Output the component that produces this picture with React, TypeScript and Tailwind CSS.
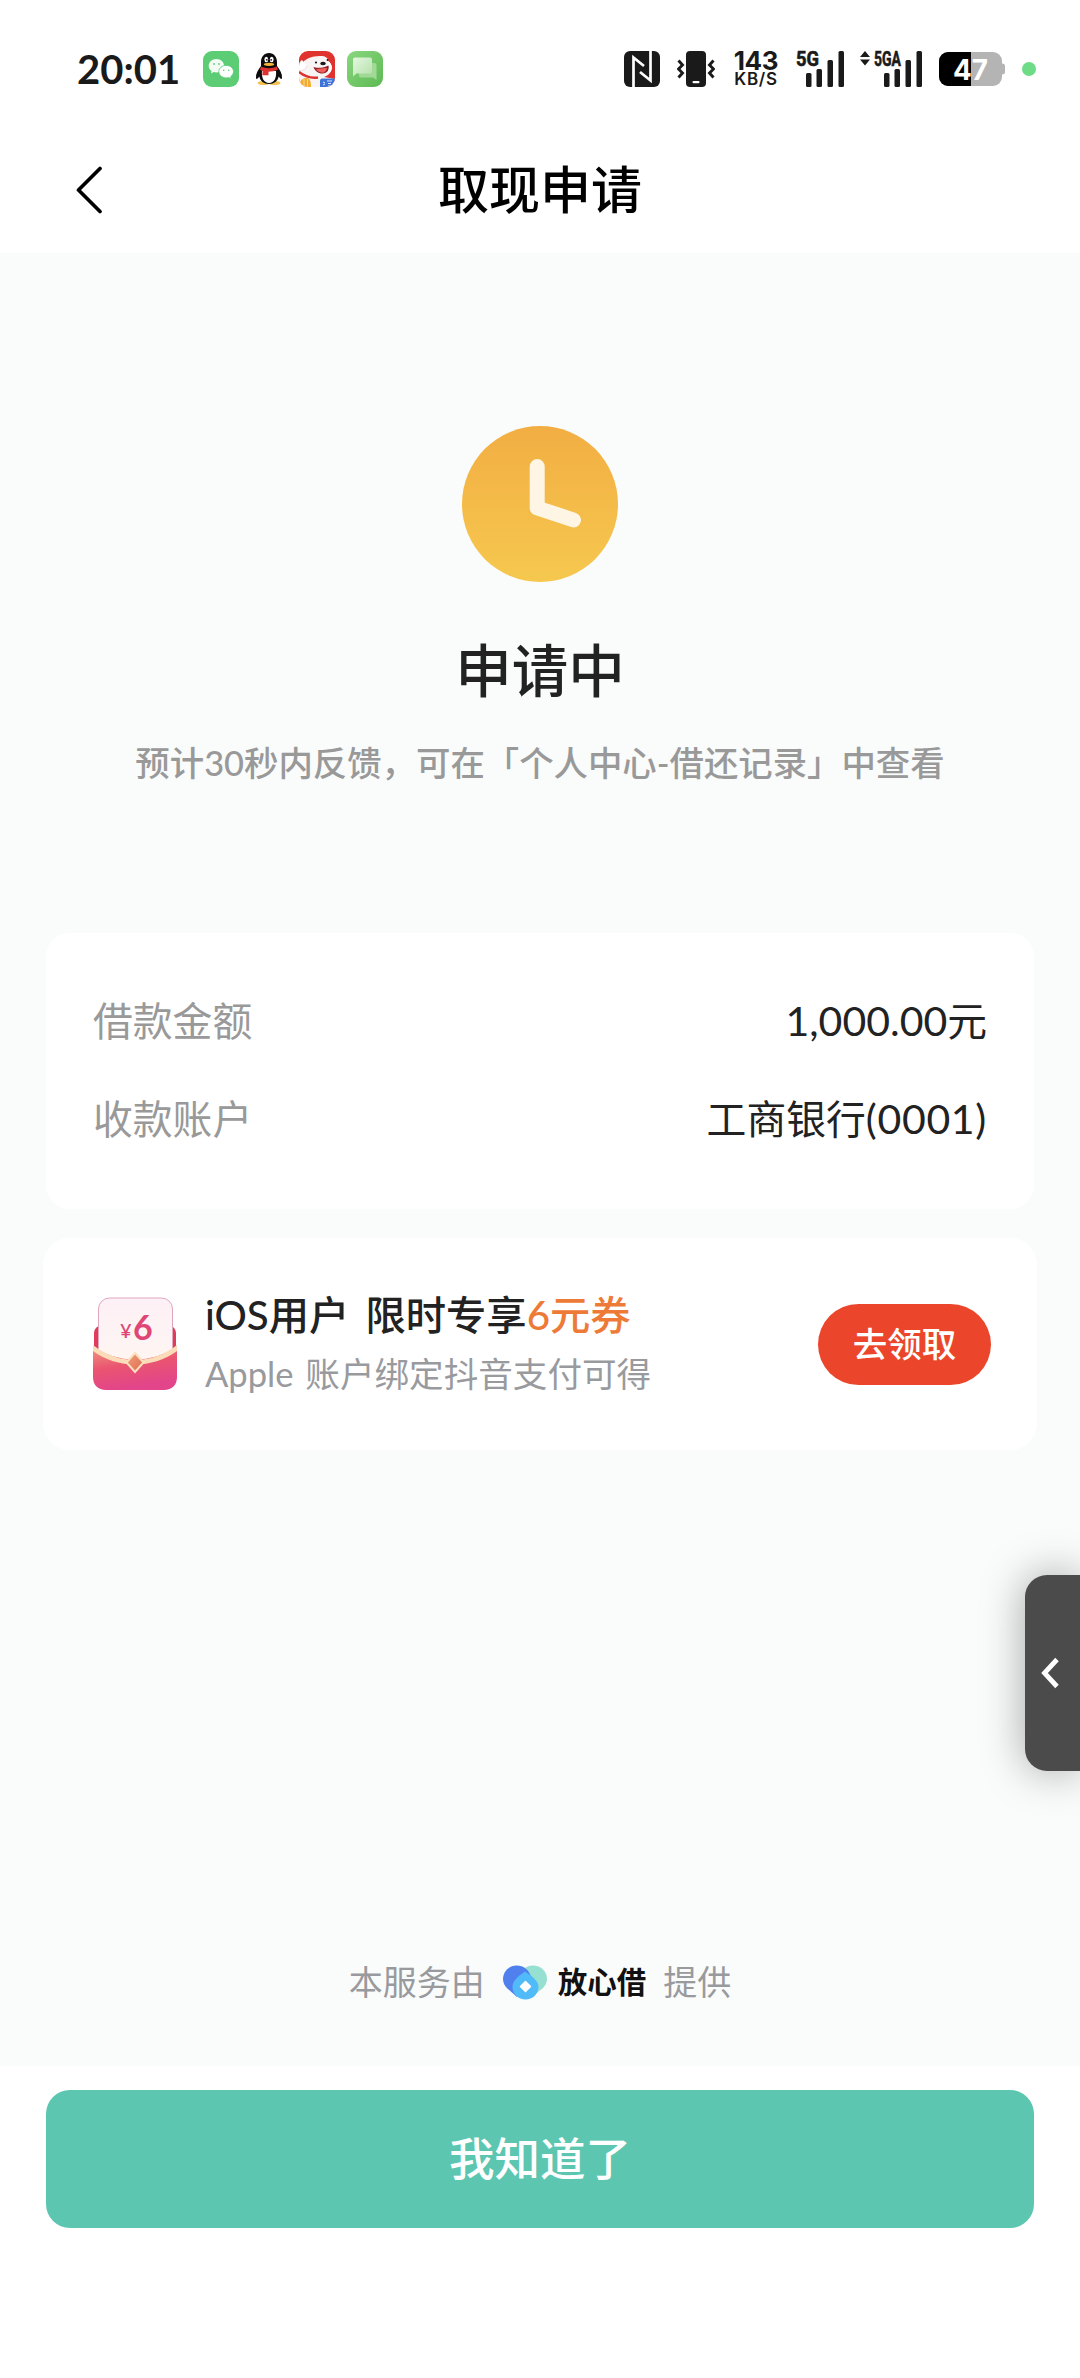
import React from 'react';

// WeChat: two overlapping speech bubbles
const WeChatIcon = () => (
  <svg className="w-9 h-9" viewBox="0 0 36 36">
    <rect width="36" height="36" rx="9" fill="#5ccd74" />
    <path d="M13.4 8C8.900 8 5.700 11 5.700 14.800c0 2.200 1.100 4 2.900 5.200l-.6 2.400 2.800-1.400c.8.3 1.700.4 2.600.4 4.400 0 7.700-2.900 7.700-6.600S17.800 8 13.400 8z" fill="#f4fbf5" />
    <path d="M23.200 14.400c-4.200 0-7.400 2.700-7.400 6.200s3.200 6.300 7.400 6.300c.9 0 1.700-.1 2.500-.4l2.500 1.300-.5-2.200c1.700-1.200 2.800-2.900 2.800-5 0-3.500-3.200-6.200-7.300-6.200z" fill="#fff" stroke="#5ccd74" strokeWidth="0.8" />
    <circle cx="11" cy="13" r="0.9" fill="#5ccd74" />
    <circle cx="16" cy="13" r="0.9" fill="#5ccd74" />
    <circle cx="20.700" cy="19.200" r="0.8" fill="#5ccd74" />
    <circle cx="25.700" cy="19.200" r="0.8" fill="#5ccd74" />
  </svg>
);

const PenguinIcon = () => (
  <svg className="w-7 h-9" viewBox="0 0 28 36">
    <ellipse cx="8.500" cy="32" rx="6" ry="2" fill="#f3c24f" />
    <ellipse cx="19.500" cy="32" rx="6" ry="2" fill="#f3c24f" />
    <path d="M14 2C9 2 6 6 6 11v4c-3 4-5.500 8-5 12 .2 1.700 1.700 1 3.300-1.500C5 30 9 33 14 33s9-3 9.700-7.500C25.300 28 26.800 28.700 27 27c.5-4-2-8-5-12v-4c0-5-3-9-8-9z" fill="#0c0c0e" />
    <path d="M7 20c-.8 7 2 12 7 12s7.800-5 7-12z" fill="#fff" />
    <ellipse cx="11.300" cy="8.500" rx="1.900" ry="2.700" fill="#fff" />
    <ellipse cx="16.700" cy="8.500" rx="1.900" ry="2.700" fill="#fff" />
    <circle cx="11.800" cy="8.800" r="0.9" fill="#111" />
    <circle cx="16.200" cy="8.800" r="0.9" fill="#111" />
    <ellipse cx="14" cy="13.300" rx="5.200" ry="1.600" fill="#f5b43a" />
    <path d="M6 15.500c5 2.200 11 2.200 16 0l.8 3.300c-3 1.300-6 1.900-9.300 2v3.400H7.300l.4-4.200c-1-.3-2-.7-2.600-1.200z" fill="#dd3330" />
  </svg>
);

const ShoppingDogIcon = () => (
  <svg className="w-9 h-9" viewBox="0 0 36 36">
    <defs>
      <clipPath id="dog-clip">
        <rect width="36" height="36" rx="9" />
      </clipPath>
    </defs>
    <g clipPath="url(#dog-clip)">
      <rect width="36" height="36" fill="#e0322f" />
      <path d="M0 36V17c2-3 4-7 8-9 3-2 8-3 13-3 6 0 8 2 8 5 3 2 5 6 3 10-1 3-4 5-7 6l11 2v8z" fill="#f8f4f4" />
      <path d="M3 9c-3 2-4 7-3 11 3 0 6-1 8-5" fill="#fff" stroke="#dccaca" strokeWidth="0.7" />
      <path d="M29 10c3 2 5 6 3 10-1 2-2 2-4 1z" fill="#fff" />
      <path d="M14.500 16c5 1.500 10 1 15-1.500 1 5-2 8-6 8-4.500 0-7.500-2.500-9-6.500z" fill="#8f1f22" />
      <path d="M17 18.500c3-1 8-1.500 11-1.500-.5 3-2.500 4.700-4.500 4.700S18.800 20.800 17 18.500z" fill="#ec5f5c" />
      <ellipse cx="24" cy="12.500" rx="2.800" ry="1.700" fill="#1a1a1c" />
      <circle cx="17" cy="11.500" r="1.100" fill="#1a1a1c" />
      <circle cx="28.500" cy="9" r="0.9" fill="#1a1a1c" />
      <path d="M0 21c5 4 12 6.500 19 5.500" stroke="#dc3431" strokeWidth="2.400" fill="none" />
      <path d="M1 36c-1-5 1-8 5-9s6 2 6 9z" fill="#f3ac31" />
      <path d="M5 28v8M8.500 28v8" stroke="#fbe0a2" strokeWidth="0.9" />
      <path d="M21 29.500c0-1 1-2 2-2h13V36H21z" fill="#3e73d8" />
      <path d="M24 31l2 1m-2 2 2-1m2-3h5m-4 2.500h3m-3 2.500h4" stroke="#dce9ff" strokeWidth="1" />
    </g>
  </svg>
);

const MessagesIcon = () => (
  <svg className="w-9 h-9" viewBox="0 0 36 36">
    <defs>
      <linearGradient id="msg-bg" x1="0" y1="0" x2="1" y2="1">
        <stop offset="0" stopColor="#8ad67f" />
        <stop offset="1" stopColor="#5dba53" />
      </linearGradient>
      <linearGradient id="msg-bubble" x1="0" y1="0" x2="1" y2="1">
        <stop offset="0" stopColor="#e5f7df" />
        <stop offset="1" stopColor="#b4e0ab" />
      </linearGradient>
    </defs>
    <rect width="36" height="36" rx="9" fill="url(#msg-bg)" />
    <path d="M14 12h13c1.700 0 2.500.8 2.500 2.300V29l-3.200-2.500H14c-1.400 0-2-.8-2-2.200V14c0-1.300.7-2 2-2z" fill="#a2d997" />
    <path d="M8 6.500h15c1.200 0 2 .8 2 2v12c0 1.300-.8 2-2 2H9.500L6 25.500v-17c0-1.200.8-2 2-2z" fill="url(#msg-bubble)" />
  </svg>
);

const NfcIcon = () => (
  <svg className="w-9 h-9" viewBox="0 0 36 36" fill="none">
    <rect width="36" height="36" rx="6" fill="#1a1a1a" />
    <path d="M9.500 36V6.500L20 15" stroke="#fff" strokeWidth="2.700" />
    <path d="M26.500 0v29.500L16 21" stroke="#fff" strokeWidth="2.700" />
  </svg>
);

const VibrateIcon = () => (
  <svg className="w-[38px] h-9 ml-[17px]" viewBox="0 0 38 36" fill="none">
    <rect x="9" width="20" height="36" rx="4" fill="#1a1a1a" />
    <rect x="15.500" y="30" width="7" height="2.200" rx="1" fill="#fff" />
    <path d="M1.500 9.500l4 4.500-4 4 4 4-4 4.500M36.500 9.500l-4 4.500 4 4-4 4 4 4.500" stroke="#1a1a1a" strokeWidth="2.900" />
  </svg>
);

interface SignalProps {
  label: string;
  labelWidth: number;
  arrows?: boolean;
}

const SignalIcon = ({ label, labelWidth, arrows }: SignalProps) => (
  <svg
    className={arrows ? 'w-[62px] h-9 ml-4 overflow-visible' : 'w-12 h-9 ml-[17px] overflow-visible'}
    viewBox={arrows ? '-14 0 62 36' : '0 0 48 36'}
    fill="#1a1a1a"
  >
    {arrows && <path d="M-9 0l5 6h-10zM-9 14.500l5-6h-10z" />}
    <text y="15" textLength={labelWidth} lengthAdjust="spacingAndGlyphs" fontFamily="Roboto, sans-serif" fontWeight="700" fontSize="21" stroke="#1a1a1a" strokeWidth="0.6">
      {label}
    </text>
    <rect x="10" y="22" width="5.500" height="14" rx="1.500" />
    <rect x="20.500" y="18" width="5.500" height="18" rx="1.500" />
    <rect x="31.500" y="9" width="5.500" height="27" rx="1.500" />
    <rect x="42.500" y="0" width="5.500" height="36" rx="1.500" />
  </svg>
);

const BatteryIcon = () => (
  <svg className="w-[66px] h-[34px] ml-[17px]" viewBox="0 0 66 34">
    <defs>
      <clipPath id="battery-clip">
        <rect width="63" height="34" rx="9" />
      </clipPath>
    </defs>
    <path d="M63 11.500c2 0 3 1 3 2.500v6c0 1.500-1 2.500-3 2.500z" fill="#b4b4b4" />
    <g clipPath="url(#battery-clip)">
      <rect width="63" height="34" fill="#b4b4b4" />
      <rect width="32" height="34" fill="#000" />
    </g>
    <text x="14" y="27.500" textLength="35" lengthAdjust="spacingAndGlyphs" fill="#fff" fontFamily="Inter, sans-serif" fontWeight="700" fontSize="29">
      47
    </text>
  </svg>
);

const StatusBar = () => (
  <div className="flex items-center justify-between h-[127px] pt-[11px] pl-[77px] pr-11">
    <div className="flex items-center">
      <span className="w-[126px] text-[40px] leading-[40px] font-bold text-[#1a1a1a]">20:01</span>
      <WeChatIcon />
      <div className="w-7 mx-4">
        <PenguinIcon />
      </div>
      <ShoppingDogIcon />
      <div className="ml-3">
        <MessagesIcon />
      </div>
    </div>
    <div className="flex items-center">
      <NfcIcon />
      <VibrateIcon />
      <div className="w-[46px] ml-[18px] flex flex-col items-center font-['Inter'] text-[#1a1a1a]">
        <span className="text-[26px] leading-[21px] font-bold tracking-[-0.300px]">143</span>
        <span className="text-[17px] leading-[17px] font-semibold tracking-[0.700px]">KB/S</span>
      </div>
      <SignalIcon label="5G" labelWidth={23} />
      <SignalIcon label="5GA" labelWidth={27} arrows />
      <BatteryIcon />
      <span className="w-3.5 h-3.5 ml-[17px] rounded-full bg-[#6edb87]" />
    </div>
  </div>
);

const Header = () => (
  <header className="relative flex items-center justify-center h-[126px]">
    <svg className="absolute left-[75px] top-[39px] w-7 h-12" viewBox="0 0 28 48" fill="none">
      <path d="M25 2.500L3.500 24 25 45.500" stroke="#000" strokeWidth="3.700" strokeLinecap="round" strokeLinejoin="round" />
    </svg>
    <h1 className="text-[51px] leading-[60px] font-medium text-black">取现申请</h1>
  </header>
);

const ClockIcon = () => (
  <svg className="w-[156px] h-[156px]" viewBox="0 0 156 156" fill="none">
    <defs>
      <linearGradient id="clock-bg" x1="0" y1="0" x2="0" y2="1">
        <stop offset="0" stopColor="#f2ae43" />
        <stop offset="1" stopColor="#f6c84e" />
      </linearGradient>
    </defs>
    <circle cx="78" cy="78" r="78" fill="url(#clock-bg)" />
    <path d="M75.200 40.500V82L111.500 94" stroke="#fef5e4" strokeWidth="15" strokeLinecap="round" strokeLinejoin="round" />
  </svg>
);

const CouponIcon = () => (
  <svg className="w-[84px] h-[94px]" viewBox="0 0 84 94">
    <defs>
      <linearGradient id="coupon-paper" x1="0" y1="0" x2="0" y2="1">
        <stop offset="0" stopColor="#fdf0f6" />
        <stop offset="1" stopColor="#fff7f1" />
      </linearGradient>
      <linearGradient id="coupon-pocket" x1="0" y1="0" x2="0.3" y2="1">
        <stop offset="0" stopColor="#f09a80" />
        <stop offset="0.500" stopColor="#ea5570" />
        <stop offset="1" stopColor="#e2458a" />
      </linearGradient>
      <linearGradient id="coupon-gem" x1="0" y1="0" x2="1" y2="1">
        <stop offset="0" stopColor="#f2a07d" />
        <stop offset="1" stopColor="#dd6c50" />
      </linearGradient>
    </defs>
    <path d="M1 36c0-3 2-6 5-7h72c3 1 5 4 5 7v24H1z" fill="#df3c5b" />
    <rect x="5.500" y="1" width="74" height="80" rx="11" fill="url(#coupon-paper)" stroke="#dfa6bd" />
    <path d="M0 49c24 18 60 18 84 0v31c0 8-5 13-13 13H13C5 93 0 88 0 80z" fill="url(#coupon-pocket)" />
    <path d="M0 48c25 20 59 20 84 0v6c-25 18-59 18-84 0z" fill="#fbdcb8" />
    <path d="M42 56l8.500 9.500L42 75l-8.500-9.500z" fill="url(#coupon-gem)" stroke="#fcdfbd" strokeWidth="2" />
    <text x="27" y="41" fill="#df4675" fontFamily="Lato, 'Noto Sans CJK SC', sans-serif" fontWeight="500" fontSize="20">¥</text>
    <text x="40" y="43" fill="#df4675" fontFamily="Lato, sans-serif" fontWeight="700" fontSize="34">6</text>
  </svg>
);

const BrandLogo = () => (
  <svg className="w-11 h-[35px] ml-[18px]" viewBox="0 0 44 35">
    <path d="M30 .5c8 0 14 6 14 13.500 0 4-2 7-4.500 9.500L28 32 16 14C17 6 22 .5 30 .5z" fill="#96e0d1" />
    <path d="M13.500.5C6 .5 0 6.500 0 14c0 4 1.800 7 4.300 9.500L14 32l14-20C26 5 21 .5 13.500.5z" fill="#4f80ee" />
    <path d="M22 6.500C27 10 35.500 15 35.500 22c0 7-6 12.500-13 12.500S9.500 29 9.500 22C9.500 15 17 10 22 6.500z" fill="#51bbfa" />
    <path d="M22.500 16.500l5 5-5 5-5-5z" fill="#fff" stroke="#fff" strokeWidth="1.500" strokeLinejoin="round" />
  </svg>
);

interface DetailRowProps {
  label: string;
  children: React.ReactNode;
}

const DetailRow = ({ label, children }: DetailRowProps) => (
  <div className="flex items-center justify-between text-[39.800px] leading-[60px]">
    <span className="text-[#999]">{label}</span>
    <span className="text-[#222]">{children}</span>
  </div>
);

const PromoCard = () => (
  <section className="flex items-center h-[212px] mx-[43px] mt-[29px] pl-[50px] pr-[46px] rounded-[27px] bg-white">
    <CouponIcon />
    <div className="flex-1 ml-7 pt-0.5">
      <p className="text-[40.300px] leading-[58px] font-medium text-[#222] [word-spacing:6px]">
        iOS用户 限时专享<span className="text-[#ee7a38]">6元券</span>
      </p>
      <p className="text-[34.600px] leading-[60px] text-[#999a9e] [word-spacing:3px]">Apple 账户绑定抖音支付可得</p>
    </div>
    <button className="w-[173px] h-[81px] rounded-full bg-[#eb462b] text-[34.500px] leading-[50px] font-medium text-white">
      去领取
    </button>
  </section>
);

// Collapsed drawer handle pinned to the right edge
const SideHandle = () => (
  <div className="absolute right-0 top-[1575px] flex items-center w-[55px] h-[196px] pl-4 rounded-l-[22px] bg-[#4b4b4b] shadow-[0_0_44px_rgba(0,0,0,0.35)]">
    <svg className="w-[18px] h-8" viewBox="0 0 18 32" fill="none">
      <path d="M16 2.500L3.500 16 16 29.500" stroke="#fff" strokeWidth="4.800" />
    </svg>
  </div>
);

export default function App() {
  return (
    <div className="relative flex flex-col w-[1080px] h-[2378px] overflow-hidden bg-white font-['Lato','Noto_Sans_CJK_SC',sans-serif]">
      <StatusBar />
      <Header />

      <main className="flex flex-col h-[1813px] pt-[173px] pb-[59px] bg-[#fafcfb]">
        <div className="flex flex-col items-center">
          <ClockIcon />
          <h2 className="mt-12 text-[56.500px] leading-[80px] font-medium text-[#222]">申请中</h2>
          <p className="mt-7 text-[34.400px] leading-[50px] font-medium text-[#999]">
            预计30秒内反馈，可在「个人中心-借还记录」中查看
          </p>
        </div>

        <section className="flex flex-col gap-[38px] h-[276px] mx-[46px] mt-[145px] pt-[58px] px-[47px] rounded-[24px] bg-white">
          <DetailRow label="借款金额">
            <span className="text-[41px]">1,000.00</span>元
          </DetailRow>
          <DetailRow label="收款账户">
            工商银行<span className="text-[41px] tracking-[0.700px]">(0001)</span>
          </DetailRow>
        </section>

        <PromoCard />

        <div className="flex items-center justify-center mt-auto text-[34px] leading-[50px] text-[#999a9e]">
          <span>本服务由</span>
          <BrandLogo />
          <span className="ml-[11px] mr-[17px] text-[29.500px] font-bold text-[#111]">放心借</span>
          <span>提供</span>
        </div>
      </main>

      <footer className="px-[46px] pt-6">
        <button className="w-full h-[138px] rounded-[24px] bg-[#5cc6b1] text-[45.500px] leading-[60px] font-medium text-white">
          我知道了
        </button>
      </footer>

      <SideHandle />
    </div>
  );
}
